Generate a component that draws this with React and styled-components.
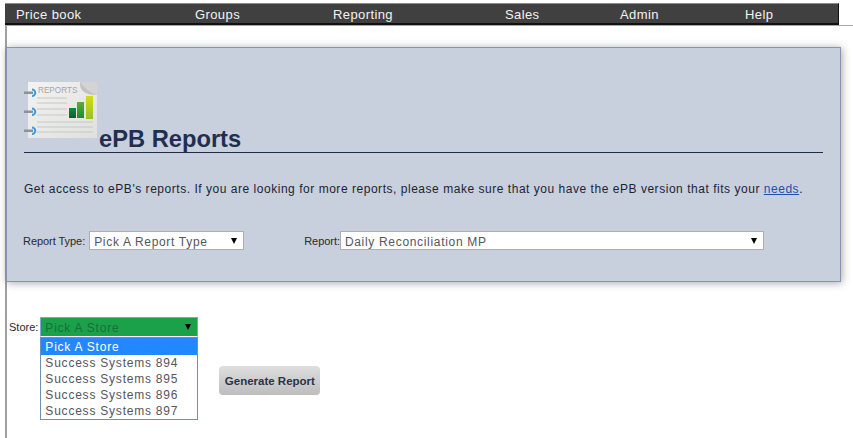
import React from "react";
import styled, { createGlobalStyle } from "styled-components";

const Global = createGlobalStyle`
  html, body { margin: 0; padding: 0; background: #fff; overflow: hidden; }
  body { font-family: "Liberation Sans", Arial, sans-serif; width: 853px; height: 438px; }
`;

const Page = styled.div`
  position: relative;
  width: 853px;
  height: 438px;
  padding: 3px 0 0 5px;
  box-sizing: border-box;
`;

const NavBar = styled.nav`
  display: flex;
  width: 834px;
  height: 22px;
  padding-left: 11px;
  box-sizing: border-box;
  background: #404040;
  border-top: 1px solid #8c8c8c;
  border-bottom: 2px solid #111;
  border-right: 1px solid #111;
`;

const NavItem = styled.a`
  width: ${(p) => p.$w}px;
  box-sizing: border-box;
  flex: none;
  color: #f2f2f2;
  font-size: 13px;
  letter-spacing: 0.4px;
  line-height: 21px;
`;

const Content = styled.div`
  width: 848px;
  height: 413px;
  box-sizing: border-box;
  border-left: 2px solid #a0a0a0;
  border-top: 1px solid #a8a8a8;
`;

const Panel = styled.section`
  margin-top: 21px;
  margin-left: -1px;
  width: 835px;
  height: 235px;
  box-sizing: border-box;
  padding: 34px 17px 0 17px;
  background: #c8cfdd;
  border: 1px solid #8796b0;
  box-shadow: 1px 1px 8px rgba(0, 0, 0, 0.35);
`;

const TitleRow = styled.div`
  display: flex;
  align-items: flex-end;
  height: 71px;
  box-sizing: border-box;
  border-bottom: 1px solid #1d2c4a;
  width: 799px;
`;

const IconSlot = styled.div`
  align-self: flex-start;
  flex: none;
  height: 58px;
`;

const Title = styled.h1`
  margin: 0 0 -1px 0;
  font-size: 23.7px;
  line-height: 28px;
  font-weight: bold;
  color: #1f2f4f;
`;

const Intro = styled.p`
  margin: 27px 0 0;
  font-size: 12px;
  line-height: 18px;
  letter-spacing: 0.53px;
  color: #1c2434;
  white-space: nowrap;
`;

const NeedsLink = styled.a`
  color: #1d4fb0;
  text-decoration: underline;
`;

const FilterRow = styled.div`
  display: flex;
  align-items: center;
  margin: 33px 0 0 -1px;
`;

const Label = styled.label`
  font-size: 11px;
  letter-spacing: -0.05px;
  color: #2a2a2a;
  margin-right: ${(p) => p.$gap ?? 4}px;
  white-space: nowrap;
`;

const SelectBox = styled.div`
  position: relative;
  width: ${(p) => p.$w}px;
  height: 19px;
  box-sizing: border-box;
  background: #fff;
  border: 1px solid #aeaeae;
  padding-left: 4px;
  margin-right: ${(p) => p.$mr ?? 0}px;
  font-size: 12px;
  letter-spacing: 0.68px;
  line-height: 20px;
  color: #55555f;
  white-space: nowrap;
`;

const Arrow = styled.span`
  position: absolute;
  right: ${(p) => p.$r ?? 6}px;
  top: 6px;
  width: 0;
  height: 0;
  border-left: 3px solid transparent;
  border-right: 3px solid transparent;
  border-top: 6px solid #000;
`;

const StoreRow = styled.div`
  display: flex;
  align-items: flex-start;
  margin-top: 35px;
  margin-left: 2px;
`;

const StoreLabel = styled.label`
  font-size: 11px;
  color: #2a2a2a;
  margin-right: 2px;
  line-height: 20px;
`;

const StoreColumn = styled.div`
  width: 158px;
  flex: none;
`;

const StoreSelect = styled.div`
  position: relative;
  height: 20px;
  box-sizing: border-box;
  background: #1ba14a;
  border: 1px solid #7fa5d6;
  border-bottom: 1px solid #fff;
  padding-left: 4px;
  font-size: 12px;
  letter-spacing: 0.78px;
  line-height: 21px;
  color: #15703a;
`;

const OptionList = styled.ul`
  list-style: none;
  margin: 0;
  padding: 0;
  box-sizing: border-box;
  border: 1px solid #6e90b8;
  background: #fff;
  height: 83px;
`;

const Option = styled.li`
  height: 16px;
  padding-left: 4px;
  font-size: 12px;
  letter-spacing: 0.78px;
  line-height: 17px;
  color: ${(p) => (p.$active ? "#fff" : "#555560")};
  background: ${(p) => (p.$active ? "#2288ff" : "transparent")};
  white-space: nowrap;

  &:first-child { height: 17px; line-height: 19px; }
`;

const GenerateButton = styled.button`
  margin: 49px 0 0 21px;
  width: 101px;
  height: 29px;
  border: none;
  border-radius: 4px;
  background: linear-gradient(#dedede, #bdbdbd);
  font-family: "Liberation Sans", Arial, sans-serif;
  font-weight: bold;
  font-size: 11.5px;
  color: #2b3347;
  padding: 0;
`;

function ReportIcon() {
  return (
    <svg width="75" height="58" viewBox="0 0 75 58" style={{ display: "block" }}>
      <defs>
        <linearGradient id="pg" x1="0" y1="0" x2="1" y2="1">
          <stop offset="0" stopColor="#f3f3f1" />
          <stop offset="1" stopColor="#dfe1df" />
        </linearGradient>
        <linearGradient id="b1" x1="0" y1="0" x2="0" y2="1">
          <stop offset="0" stopColor="#128a3e" />
          <stop offset="1" stopColor="#08602c" />
        </linearGradient>
        <linearGradient id="b2" x1="0" y1="0" x2="0" y2="1">
          <stop offset="0" stopColor="#58b02e" />
          <stop offset="1" stopColor="#1f8a34" />
        </linearGradient>
        <linearGradient id="b3" x1="0" y1="0" x2="0" y2="1">
          <stop offset="0" stopColor="#d4dc14" />
          <stop offset="1" stopColor="#96c224" />
        </linearGradient>
      </defs>
      <rect x="4" y="0" width="69" height="56" fill="#d4d5d3" />
      <path d="M4 0H56Q60 9 73 13V56H4Z" fill="url(#pg)" />
      <path d="M56 0Q55 13 73 13Q62 9 56 0Z" fill="#c2c3bf" />
      <text x="14" y="11" fontFamily="Liberation Sans, sans-serif" fontSize="8.2" fill="#a2a7aa">REPORTS</text>
      <g stroke="#c6c8c6" strokeWidth="1">
        <path d="M13 16H43M13 21H43M13 27H43M13 33H43M13 40H69M13 45H69M13 50H69" />
      </g>
      <rect x="45" y="26" width="7" height="10" fill="url(#b1)" />
      <rect x="53" y="20" width="7" height="16" fill="url(#b2)" />
      <rect x="62" y="14" width="7" height="23" fill="url(#b3)" />
      {[10, 29, 48].map((y) => (
        <g key={y}>
          <rect x="0" y={y - 0.5} width="9" height="2.5" fill="#8b9298" />
          <path d={`M8 ${y - 2.5}a3.2 3.2 0 0 1 0 6.5`} fill="none" stroke="#3d9be0" strokeWidth="2" />
        </g>
      ))}
    </svg>
  );
}

const navItems = [
  ["Price book", 179],
  ["Groups", 138],
  ["Reporting", 172],
  ["Sales", 115],
  ["Admin", 125],
  ["Help", 60],
];

const stores = ["Pick A Store", "Success Systems 894", "Success Systems 895", "Success Systems 896", "Success Systems 897"];

export default function App() {
  return (
    <Page>
      <Global />
      <NavBar>
        {navItems.map(([t, w]) => (
          <NavItem key={t} $w={w}>{t}</NavItem>
        ))}
      </NavBar>
      <Content>
        <Panel>
          <TitleRow>
            <IconSlot><ReportIcon /></IconSlot>
            <Title>ePB Reports</Title>
          </TitleRow>
          <Intro>
            Get access to ePB's reports. If you are looking for more reports, please make sure that you have the ePB version that fits your <NeedsLink>needs</NeedsLink>.
          </Intro>
          <FilterRow>
            <Label>Report Type:</Label>
            <SelectBox $w={155} $mr={60}>Pick A Report Type<Arrow /></SelectBox>
            <Label $gap={0}>Report:</Label>
            <SelectBox $w={424}>Daily Reconciliation MP<Arrow /></SelectBox>
          </FilterRow>
        </Panel>
        <StoreRow>
          <StoreLabel>Store:</StoreLabel>
          <StoreColumn>
            <StoreSelect>Pick A Store<Arrow $r={6} /></StoreSelect>
            <OptionList>
              {stores.map((s, i) => (
                <Option key={s} $active={i === 0}>{s}</Option>
              ))}
            </OptionList>
          </StoreColumn>
          <GenerateButton>Generate Report</GenerateButton>
        </StoreRow>
      </Content>
    </Page>
  );
}
